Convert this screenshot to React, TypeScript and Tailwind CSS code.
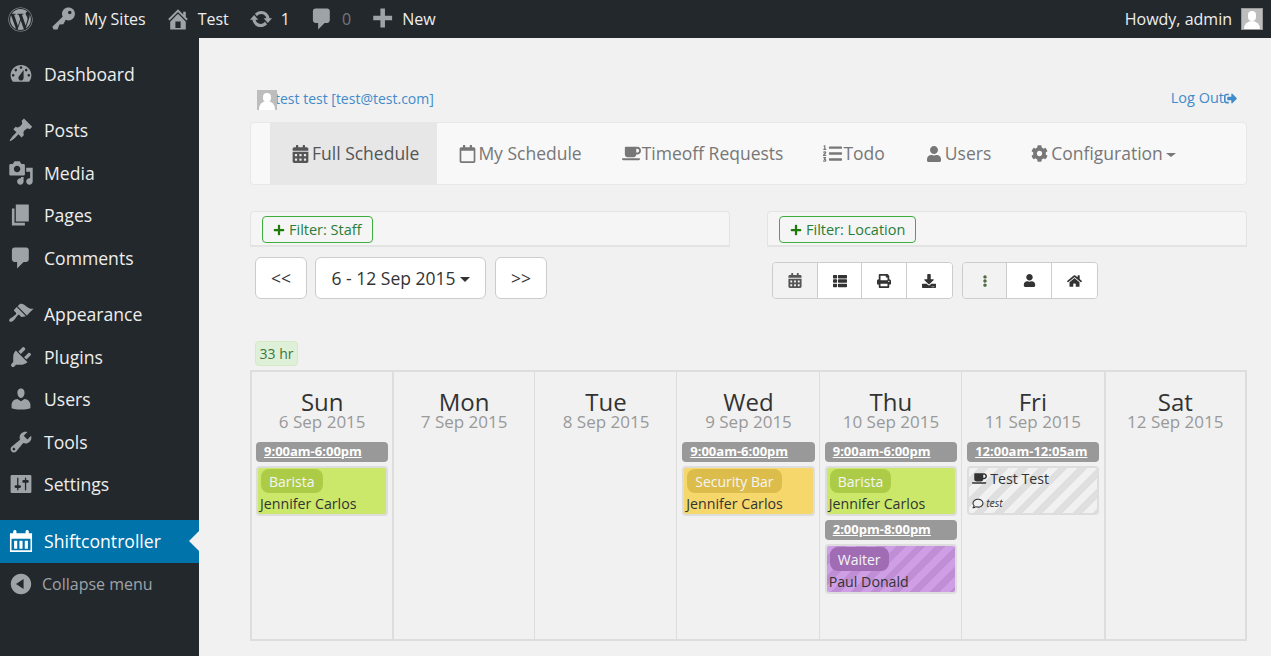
import React from "react";
import { FaWordpress, FaCalendarAlt, FaRegCalendar, FaCoffee, FaListOl, FaUser, FaCog, FaPlus, FaThList, FaPrint, FaDownload, FaEllipsisV, FaHome, FaSignOutAlt, FaRegComment } from "react-icons/fa";

const D = ({ d, className = "" }: { d: string; className?: string }) => (
  <svg viewBox="0 0 20 20" fill="currentColor" className={`shrink-0 ${className}`}><path d={d} /></svg>
);

const P = {
  dashboard: "M3.76 16h12.48c1.1-1.37 1.76-3.11 1.76-5 0-4.42-3.58-8-8-8s-8 3.58-8 8c0 1.89.66 3.63 1.76 5zM10 4c.55 0 1 .45 1 1s-.45 1-1 1-1-.45-1-1 .45-1 1-1zM6 6c.55 0 1 .45 1 1s-.45 1-1 1-1-.45-1-1 .45-1 1-1zm8 0c.55 0 1 .45 1 1s-.45 1-1 1-1-.45-1-1 .45-1 1-1zm-5.37 5.55L12 7v6c0 1.1-.9 2-2 2s-2-.9-2-2c0-.57.24-1.08.63-1.45zM4 10c.55 0 1 .45 1 1s-.45 1-1 1-1-.45-1-1 .45-1 1-1zm12 0c.55 0 1 .45 1 1s-.45 1-1 1-1-.45-1-1 .45-1 1-1z",
  post: "M10.44 3.02l1.82-1.82 6.36 6.35-1.83 1.82c-1.05-.68-2.48-.57-3.41.36l-.75.75c-.92.93-1.04 2.35-.35 3.41l-1.83 1.82-2.41-2.41-2.8 2.79c-.42.42-3.38 2.71-3.8 2.29s1.86-3.39 2.28-3.81l2.79-2.79L4.1 9.36l1.83-1.82c1.05.69 2.48.57 3.4-.36l.75-.75c.93-.92 1.05-2.35.36-3.41z",
  media: "M13 11V4c0-.55-.45-1-1-1h-1.67L9 1H5L3.67 3H2c-.55 0-1 .45-1 1v7c0 .55.45 1 1 1h10c.55 0 1-.45 1-1zM7 4.5c1.38 0 2.5 1.12 2.5 2.5S8.38 9.5 7 9.5 4.5 8.38 4.5 7 5.62 4.5 7 4.5zM14 6h5v10.5c0 1.38-1.12 2.5-2.5 2.5S14 17.88 14 16.5s1.12-2.5 2.5-2.5c.17 0 .34.02.5.05V9h-3V6zm-4 8.05V13h2v3.5c0 1.38-1.12 2.5-2.5 2.5S7 17.88 7 16.5 8.12 14 9.5 14c.17 0 .34.02.5.05z",
  page: "M6 15V2h10v13H6zm-1 1h8v2H3V5h2v11z",
  comment: "M5 2h9c1.1 0 2 .9 2 2v7c0 1.1-.9 2-2 2h-2l-5 5v-5H5c-1.1 0-2-.9-2-2V4c0-1.1.9-2 2-2z",
  appearance: "M14.48 11.06L7.41 3.99l1.5-1.5c.5-.56 2.3-.47 3.51.32 1.21.8 1.43 1.28 2.91 2.1 1.18.64 2.45 1.26 4.45.85zm-.71.71L6.7 4.7 4.93 6.47c-.39.39-.39 1.02 0 1.41l1.06 1.06c.39.39.39 1.03 0 1.42-.6.6-1.43 1.11-2.21 1.69-.35.26-.7.53-1.01.84C1.43 13.23.4 14.85 1.25 15.7c.84.84 2.46-.18 3.78-1.52.31-.31.58-.66.85-1.01.57-.78 1.08-1.61 1.69-2.21.39-.39 1.02-.39 1.41 0l1.06 1.06c.39.39 1.02.39 1.41 0z",
  plugins: "M13.11 4.36L9.87 7.6 8 5.73l3.24-3.24c.35-.34 1.05-.2 1.56.32.52.51.66 1.21.31 1.55zm-8 1.77l.91-1.12 9.01 9.01-1.19.84c-.71.71-2.63 1.16-3.82 1.16H6.14L4.9 17.26c-.59.59-1.54.59-2.12 0-.59-.58-.59-1.53 0-2.12l1.24-1.24v-3.88c0-1.13.4-3.19 1.09-3.89zm7.26 3.97l3.24-3.24c.34-.35 1.04-.21 1.55.31.52.51.66 1.21.31 1.55l-3.24 3.25z",
  users: "M10 9.25c-2.27 0-2.73-3.44-2.73-3.44C7 4.02 7.82 2 9.97 2c2.16 0 2.98 2.02 2.71 3.81 0 0-.41 3.44-2.68 3.44zm0 2.57L12.72 10c2.39 0 4.52 2.33 4.52 4.53v2.49s-3.65 1.13-7.24 1.13c-3.65 0-7.24-1.13-7.24-1.13v-2.49c0-2.25 1.94-4.48 4.47-4.48z",
  tools: "M16.68 9.77c-1.34 1.34-3.3 1.67-4.95.99l-5.41 6.52c-.99.99-2.59.99-3.58 0s-.99-2.59 0-3.57l6.52-5.42c-.68-1.65-.35-3.61.99-4.95 1.28-1.28 3.12-1.62 4.72-1.06l-2.89 2.89 2.82 2.82 2.86-2.87c.53 1.58.18 3.39-1.08 4.65zM3.81 16.21c.4.39 1.04.39 1.43 0 .4-.4.4-1.04 0-1.43-.39-.4-1.03-.4-1.43 0-.39.39-.39 1.03 0 1.43z",
  settings: "M18 16V4c0-.55-.45-1-1-1H3c-.55 0-1 .45-1 1v12c0 .55.45 1 1 1h14c.55 0 1-.45 1-1zM8 11h1c.55 0 1 .45 1 1s-.45 1-1 1H8v1.5c0 .28-.22.5-.5.5s-.5-.22-.5-.5V13H6c-.55 0-1-.45-1-1s.45-1 1-1h1V5.5c0-.28.22-.5.5-.5s.5.22.5.5V11zm5-2h-1c-.55 0-1-.45-1-1s.45-1 1-1h1V5.5c0-.28.22-.5.5-.5s.5.22.5.5V7h1c.55 0 1 .45 1 1s-.45 1-1 1h-1v5.5c0 .28-.22.5-.5.5s-.5-.22-.5-.5V9z",
  calendar: "M1.5 4H4V2.8C4 2 4.6 1.5 5.3 1.5S6.5 2 6.5 2.8V4h7V2.8c0-.8.6-1.3 1.3-1.3s1.2.5 1.2 1.3V4h2.5v14.5h-17V4zm1.2 4.2v9h14.6v-9H2.7zM4.7 9.8h2.4V16H4.7V9.8zm4.1 0h2.4V16H8.8V9.8zm4.1 0h2.4V16h-2.4V9.8z",
  collapse: "M10 2.16c4.33 0 7.84 3.51 7.84 7.84s-3.51 7.84-7.84 7.84S2.16 14.33 2.16 10 5.71 2.16 10 2.16zm2 11.72V6.12L6.18 9.97z",
  key: "M16.95 2.58c1.96 1.95 1.96 5.12 0 7.07-1.51 1.51-3.75 1.84-5.59 1.01l-1.87 3.31-2.99.31L5 18H2l-1-2 7.95-7.69c-.92-1.87-.62-4.18.93-5.73 1.95-1.96 5.11-1.96 7.07 0zm-2.51 3.79c.74 0 1.33-.6 1.33-1.34 0-.73-.59-1.33-1.33-1.33-.73 0-1.33.6-1.33 1.33 0 .74.6 1.34 1.33 1.34z",
  home: "M16 8.5l1.53 1.53-1.06 1.06L10 4.62l-6.47 6.47-1.06-1.06L10 2.5l4 4v-2h2v4zm-6-2.46l6 5.99V18H4v-5.97zM12 17v-5H8v5h4z",
  update: "M10.2 3.28c3.53 0 6.43 2.61 6.92 6h2.08l-3.5 4-3.5-4h2.32c-.45-1.97-2.21-3.45-4.32-3.45-1.45 0-2.73.71-3.54 1.78L4.95 5.66C6.23 4.2 8.11 3.28 10.2 3.28zm-.4 13.44c-3.52 0-6.43-2.61-6.92-6H.8l3.5-4c1.17 1.33 2.33 2.67 3.5 4H5.48c.45 1.97 2.21 3.45 4.32 3.45 1.45 0 2.73-.71 3.54-1.78l1.71 1.95c-1.28 1.46-3.15 2.38-5.25 2.38z",
  plus: "M17 7.5v3.5h-5.5v5.5H8V11H2.5V7.5H8V2h3.5v5.5H17z",
};

const MenuItem = ({ icon, label, active }: { icon: string; label: string; active?: boolean }) => (
  <div className={`relative flex h-[42.5px] items-center pl-[8px] text-[17.6px] ${active ? "bg-[#0073aa] text-white" : "text-[#eeeeee]"}`}>
    <D d={icon} className={`mr-[10px] h-[26px] w-[26px] ${active ? "text-white" : "text-[#9ea3a8]"}`} />
    <span>{label}</span>
    {active && <span className="absolute right-0 top-[11px] h-0 w-0 border-y-[10px] border-r-[10px] border-y-transparent border-r-[#f1f1f1]" />}
  </div>
);

const BarItem = ({ icon, label, muted, cls, iconCls, gap }: { icon: string; label: string; muted?: boolean; cls: string; iconCls?: string; gap: string }) => (
  <div className={`flex items-center ${cls}`}>
    <D d={icon} className={iconCls ?? "h-[26px] w-[26px] text-[#9ea3a8]"} />
    <span className={`${gap} ${muted ? "text-[#72777c]" : "text-[#eeeeee]"}`}>{label}</span>
  </div>
);

const Tab = ({ icon, label, active, caret }: { icon: React.ReactNode; label: string; active?: boolean; caret?: boolean }) => (
  <div className={`flex h-full items-center pl-[22px] pr-[18px] ${active ? "bg-[#e7e7e7] text-[#555555]" : "text-[#777777]"}`}>
    {icon}
    <span>{label}</span>
    {caret && <span className="ml-[3px] mt-[2px] h-0 w-0 border-x-[5px] border-t-[4px] border-x-transparent border-t-[#777777]" />}
  </div>
);

const Filter = ({ label }: { label: string }) => (
  <div className="h-[36px] rounded-t-[4px] border border-b-2 border-[#e3e3e3] bg-[#f5f5f5] pl-[11px] pt-[4px]">
    <span className="flex h-[27px] w-fit items-center rounded-[4px] border border-[#3fae3f] px-[10px] text-[14.5px] text-[#2a7d3a]">
      <FaPlus className="mr-[4px] h-[12px] w-[12px] text-[#1f7a0c]" />
      {label}
    </span>
  </div>
);

const NavBtn = ({ children, cls }: { children: React.ReactNode; cls: string }) => (
  <div className={`flex h-[42px] items-center justify-center rounded-[6px] border border-[#cccccc] bg-white text-[17.5px] text-[#333333] ${cls}`}>{children}</div>
);

const IconCell = ({ children, dim, last }: { children: React.ReactNode; dim?: boolean; last?: boolean }) => (
  <div className={`flex h-full w-[44.7px] items-center justify-center text-[#333333] ${last ? "" : "border-r border-[#cccccc]"} ${dim ? "bg-[#f2f2f2]" : "bg-white"}`}>{children}</div>
);

const Time = ({ t }: { t: string }) => (
  <div className="mb-[4px] flex h-[20px] items-center rounded-[4px] bg-[#999999] pl-[8px] text-[13px] font-bold text-white underline">{t}</div>
);

const Shift = ({ label, name, bg, pill }: { label: string; name: string; bg: string; pill: string }) => (
  <div className={`mb-[4px] h-[50px] rounded-[4px] border-2 border-[#dddddd] pl-[2px] ${bg}`}>
    <span className={`ml-[1px] mt-[1px] flex h-[24px] w-fit items-center rounded-[8px] px-[8px] text-[14px] text-[#f5f5f5] ${pill}`}>{label}</span>
    <div className="text-[14.2px] leading-[21px] text-[#333333]">{name}</div>
  </div>
);

const Day = ({ name, date, cls, children }: { name: string; date: string; cls?: string; children?: React.ReactNode }) => (
  <div className={`pt-[17px] ${cls ?? "border-r border-[#dddddd] pl-[5px] pr-[4px]"}`}>
    <div className="text-center text-[24px] leading-[25px] text-[#333333]">{name}</div>
    <div className="mb-[12px] text-center text-[17px] leading-[16px] text-[#999999]">{date}</div>
    {children}
  </div>
);

const green = "bg-[#cbe86b]";
const greenPill = "bg-[#accc48]";

export default function App() {
  return (
    <div className="flex h-[656px] w-[1271px] flex-col overflow-hidden bg-[#f1f1f1] font-['Open_Sans',sans-serif] text-[#333333]">
      <header className="flex h-[38px] shrink-0 items-center bg-[#23282d] text-[16px]">
        <FaWordpress className="ml-[8px] h-[25px] w-[25px] text-[#9ea3a8]" />
        <BarItem icon={P.key} label="My Sites" cls="ml-[18px]" gap="ml-[7px]" />
        <BarItem icon={P.home} label="Test" cls="ml-[19px]" gap="ml-[7px]" />
        <BarItem icon={P.update} label="1" cls="ml-[19px]" gap="ml-[8px]" iconCls="ml-px h-[24px] w-[24px] text-[#9ea3a8]" />
        <BarItem icon={P.comment} label="0" muted cls="ml-[19px]" gap="ml-[7px]" />
        <BarItem icon={P.plus} label="New" cls="ml-[19px]" gap="ml-[6px]" />
        <div className="ml-auto mr-[8px] flex items-center text-[#eeeeee]">
          <span>Howdy, admin</span>
          <span className="relative ml-[9px] block h-[22px] w-[22px] overflow-hidden border border-[#999999] bg-[#bdbdbd]">
            <span className="absolute left-[6px] top-[2px] h-[10px] w-[8px] rounded-full bg-white" />
            <span className="absolute left-[2px] top-[12px] h-[12px] w-[16px] rounded-t-full bg-white" />
          </span>
        </div>
      </header>

      <div className="flex flex-1">
        <aside className="w-[199px] shrink-0 bg-[#23282d] pt-[15px]">
          <MenuItem icon={P.dashboard} label="Dashboard" />
          <div className="h-[13.5px]" />
          <MenuItem icon={P.post} label="Posts" />
          <MenuItem icon={P.media} label="Media" />
          <MenuItem icon={P.page} label="Pages" />
          <MenuItem icon={P.comment} label="Comments" />
          <div className="h-[14px]" />
          <MenuItem icon={P.appearance} label="Appearance" />
          <MenuItem icon={P.plugins} label="Plugins" />
          <MenuItem icon={P.users} label="Users" />
          <MenuItem icon={P.tools} label="Tools" />
          <MenuItem icon={P.settings} label="Settings" />
          <div className="h-[14.5px]" />
          <MenuItem icon={P.calendar} label="Shiftcontroller" active />
          <div className="flex h-[43px] items-center pl-[8px] text-[16px] text-[#9ea3a8]">
            <D d={P.collapse} className="mr-[8px] h-[26px] w-[26px]" />
            <span>Collapse menu</span>
          </div>
        </aside>

        <main className="box-content w-[997px] pl-[51px] pt-[52px]">
          <div className="flex h-[20px] items-center justify-between text-[14px] text-[#428bca]">
            <div className="flex items-center pl-[7px]">
              <span className="relative block h-[20px] w-[20px] overflow-hidden bg-[#bdbdbd]">
                <span className="absolute left-[6px] top-[3px] h-[9px] w-[8px] rounded-full bg-white" />
                <span className="absolute left-[2px] top-[11px] h-[12px] w-[16px] rounded-t-full bg-white" />
              </span>
              <span className="-mt-[4px] -ml-[2px]">test test [test@test.com]</span>
            </div>
            <div className="-mt-[4px] flex items-center pr-[10px] text-[14.5px]">
              Log Out
              <FaSignOutAlt className="h-[13px] w-[13px]" />
            </div>
          </div>

          <nav className="mt-[12px] flex h-[63px] items-stretch rounded-[4px] border border-[#e7e7e7] bg-[#f8f8f8] pl-[19px] text-[17.5px]">
            <Tab active label="Full Schedule" icon={<FaCalendarAlt className="mr-[3px] h-[18px] w-[17px]" />} />
            <Tab label="My Schedule" icon={<FaRegCalendar className="mr-[2px] h-[18px] w-[17px]" />} />
            <Tab label="Timeoff Requests" icon={<FaCoffee className="mr-px h-[17px] w-[19px]" />} />
            <Tab label="Todo" icon={<FaListOl className="mr-px h-[19px] w-[19px]" />} />
            <Tab label="Users" icon={<FaUser className="ml-px mr-[3px] h-[16px] w-[16px]" />} />
            <Tab label="Configuration" caret icon={<FaCog className="mr-[3px] h-[17px] w-[17px]" />} />
          </nav>

          <div className="mt-[26px] grid grid-cols-2 gap-x-[37px]">
            <div>
              <Filter label="Filter: Staff" />
              <div className="mt-[10px] flex pl-[5px]">
                <NavBtn cls="w-[52px]">&lt;&lt;</NavBtn>
                <NavBtn cls="ml-[8px] w-[171px]">
                  6 - 12 Sep 2015
                  <span className="ml-[4px] mt-[2px] h-0 w-0 border-x-[5px] border-t-[5px] border-x-transparent border-t-[#333333]" />
                </NavBtn>
                <NavBtn cls="ml-[9px] w-[52px]">&gt;&gt;</NavBtn>
              </div>
            </div>
            <div>
              <Filter label="Filter: Location" />
              <div className="mt-[15px] flex pl-[5px]">
                <div className="flex h-[37px] overflow-hidden rounded-[4px] border border-[#cccccc]">
                  <IconCell dim><FaCalendarAlt className="h-[15px] w-[14px] text-[#555555]" /></IconCell>
                  <IconCell><FaThList className="h-[14px] w-[16px]" /></IconCell>
                  <IconCell><FaPrint className="h-[14px] w-[14px]" /></IconCell>
                  <IconCell last><FaDownload className="h-[14px] w-[14px]" /></IconCell>
                </div>
                <div className="ml-[9px] flex h-[37px] overflow-hidden rounded-[4px] border border-[#cccccc]">
                  <IconCell dim><FaEllipsisV className="h-[12px] w-[12px] text-[#4f6b3f]" /></IconCell>
                  <IconCell><FaUser className="h-[13px] w-[13px]" /></IconCell>
                  <IconCell last><FaHome className="h-[14px] w-[15px]" /></IconCell>
                </div>
              </div>
            </div>
          </div>

          <div className="ml-[5px] mt-[42px] flex h-[25px] w-[43px] items-center justify-center rounded-[4px] border border-[#d6e9c6] bg-[#dff0d8] text-[14px] text-[#3c763d]">33 hr</div>

          <div className="mt-[4px] grid h-[271px] grid-cols-7 border-y-2 border-[#dddddd] text-[14px]">
            <Day name="Sun" date="6 Sep 2015" cls="border-l-2 border-[#dddddd] pl-[4px] pr-[4px]">
              <Time t="9:00am-6:00pm" />
              <Shift label="Barista" name="Jennifer Carlos" bg={green} pill={greenPill} />
            </Day>
            <Day name="Mon" date="7 Sep 2015" cls="border-l-2 border-r border-[#dddddd] pl-[4px] pr-[4px]" />
            <Day name="Tue" date="8 Sep 2015" />
            <Day name="Wed" date="9 Sep 2015">
              <Time t="9:00am-6:00pm" />
              <Shift label="Security Bar" name="Jennifer Carlos" bg="bg-[#f6d76b]" pill="bg-[#dcbc4a]" />
            </Day>
            <Day name="Thu" date="10 Sep 2015">
              <Time t="9:00am-6:00pm" />
              <Shift label="Barista" name="Jennifer Carlos" bg={green} pill={greenPill} />
              <Time t="2:00pm-8:00pm" />
              <Shift label="Waiter" name="Paul Donald" bg="bg-[repeating-linear-gradient(135deg,#cf9fe5_0,#cf9fe5_7px,#bf8ed4_7px,#bf8ed4_14px)]" pill="bg-[#a06cb4]" />
            </Day>
            <Day name="Fri" date="11 Sep 2015" cls="pl-[5px] pr-[6px]">
              <Time t="12:00am-12:05am" />
              <div className="h-[49px] rounded-[4px] border-2 border-[#dddddd] bg-[repeating-linear-gradient(135deg,#f1f1f1_0,#f1f1f1_7px,#dfdfdf_7px,#dfdfdf_14px)] pl-[3px] text-[14.2px] leading-[21px]">
                <div className="flex items-center">
                  <FaCoffee className="mr-[3px] h-[13px] w-[15px]" /> Test Test
                </div>
                <div className="mt-[4px] flex items-center text-[10.5px] italic">
                  <FaRegComment className="mr-[2px] h-[11px] w-[12px]" /> test
                </div>
              </div>
            </Day>
            <Day name="Sat" date="12 Sep 2015" cls="-ml-px border-x-2 border-[#dddddd] pl-[4px] pr-[4px]" />
          </div>
        </main>
      </div>
    </div>
  );
}
